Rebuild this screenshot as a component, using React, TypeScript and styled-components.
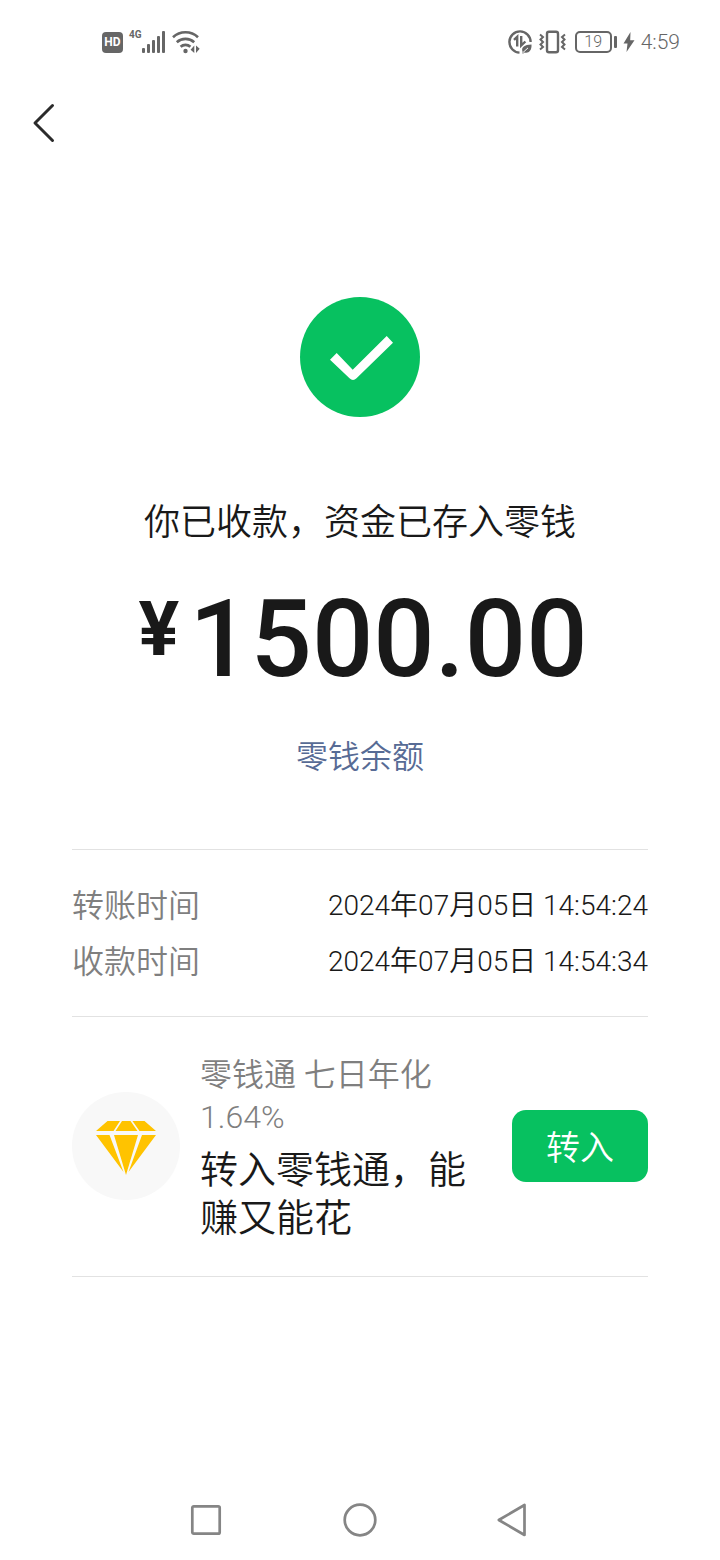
import React from "react";
import styled, { createGlobalStyle } from "styled-components";

const GlobalStyle = createGlobalStyle`
  * { box-sizing: border-box; }
  body {
    margin: 0;
    background: #fff;
    color: #191919;
    font-family: Roboto, "Noto Sans CJK SC", sans-serif;
    font-weight: 350;
  }
  p, h1, dl, dd { margin: 0; font-weight: inherit; }
  button { font: inherit; border: 0; padding: 0; background: none; cursor: pointer; }
  svg { display: block; }
`;

const Screen = styled.div`
  min-height: 100vh;
  display: flex;
  flex-direction: column;
`;

const StatusBar = styled.header`
  display: flex;
  justify-content: space-between;
  align-items: center;
  height: 84px;
  padding: 0 40px 0 102px;
  color: #666;
`;

const StatusGroup = styled.div`
  display: flex;
  align-items: center;
  gap: 6px;
`;

const HdBadge = styled.span`
  width: 21px;
  height: 21px;
  border-radius: 4px;
  background: #666;
  color: #fff;
  font: 700 12px/21px Roboto, sans-serif;
  text-align: center;
`;

const Signal = styled.div`
  display: flex;
  align-items: flex-start;
  height: 24px;
`;

const Network = styled.span`
  font: 700 10px/10px Roboto, sans-serif;
`;

const Battery = styled.span`
  display: flex;
  align-items: center;
  gap: 2px;
  margin-left: 3px;
  &::after {
    content: "";
    width: 3px;
    height: 12px;
    border-radius: 1px;
    background: #666;
  }
`;

const BatteryLevel = styled.span`
  width: 37px;
  height: 22px;
  border: 2px solid #666;
  border-radius: 5px;
  font: 300 16px/18px Roboto, sans-serif;
  text-align: center;
`;

const Clock = styled.time`
  font: 300 21px/24px Roboto, sans-serif;
`;

const TitleBar = styled.nav`
  display: flex;
  align-items: center;
  height: 78px;
  padding: 0 32px;
`;

const Main = styled.main`
  flex: 1;
  padding: 135px 72px 0;
`;

const Result = styled.section`
  display: flex;
  flex-direction: column;
  align-items: center;
  padding-bottom: 68px;
`;

const ResultText = styled.h1`
  margin-top: 82px;
  font-size: 36px;
  line-height: 48px;
`;

const Amount = styled.p`
  display: flex;
  align-items: flex-start;
  gap: 10px;
  margin-top: 36px;
  padding-left: 6px;
  font: 500 108px/112px Roboto, sans-serif;
`;

const Currency = styled.span`
  font-size: 76px;
  line-height: 92px;
  font-weight: 700;
`;

const BalanceLink = styled.a`
  margin-top: 38px;
  color: #576b95;
  font-size: 32px;
  line-height: 48px;
  text-decoration: none;
`;

const Details = styled.dl`
  padding: 28px 0 26px;
  border-top: 1px solid #e2e2e2;
  border-bottom: 1px solid #e2e2e2;
`;

const DetailRow = styled.div`
  display: flex;
  justify-content: space-between;
  line-height: 56px;
`;

const Label = styled.dt`
  color: #7f7f7f;
  font-size: 32px;
`;

const Value = styled.dd`
  font-size: 28px;
`;

const Promo = styled.section`
  display: flex;
  align-items: center;
  height: 260px;
  padding-bottom: 2px;
  border-bottom: 1px solid #e2e2e2;
`;

const PromoIcon = styled.div`
  display: grid;
  place-items: center;
  flex: none;
  width: 108px;
  height: 108px;
  padding-top: 4px;
  border-radius: 50%;
  background: #f8f8f8;
`;

const PromoText = styled.div`
  flex: 1;
  display: flex;
  flex-direction: column;
  gap: 8px;
  margin: 0 24px 0 20px;
  padding-top: 4px;
`;

const PromoRate = styled.p`
  color: #7f7f7f;
  font-size: 32px;
  line-height: 42px;
`;

const PromoTitle = styled.p`
  font-size: 38px;
  line-height: 48px;
`;

const TransferButton = styled.button`
  && {
    flex: none;
    height: 72px;
    padding: 0 34px;
    border-radius: 14px;
    background: #07c160;
    color: #fff;
    font-size: 34px;
  }
`;

const SystemNav = styled.nav`
  display: flex;
  justify-content: center;
  align-items: center;
  gap: 118px;
  height: 80px;
`;

const SignalIcon = () => (
  <svg width="24" height="24" viewBox="0 0 24 24" fill="#666" aria-hidden="true">
    <rect x="0" y="18" width="3" height="5" rx="1" />
    <rect x="5" y="14" width="3" height="9" rx="1" />
    <rect x="10" y="10" width="3" height="13" rx="1" />
    <rect x="15" y="6" width="3" height="17" rx="1" />
    <rect x="20" y="1" width="3" height="22" rx="1" />
  </svg>
);

const WifiIcon = () => (
  <svg width="28" height="24" viewBox="0 0 28 24" fill="none" stroke="#666" strokeWidth="2.6" aria-hidden="true">
    <path d="M1 7.2C8 .6 19 .6 26 7.2" />
    <path d="M4.8 12.2C9.6 7.8 17.4 7.8 22.2 12.2" />
    <path d="M8.6 16.8C11.4 14.2 15.6 14.2 18.4 16.8" />
    <circle cx="13.5" cy="21" r="2.2" fill="#666" stroke="none" />
    <path d="M22.3 15.5V23L18.600 19.800zM24 23v-7.500l3.700 3.200z" fill="#666" stroke="none" />
  </svg>
);

const DataSaverIcon = () => (
  <svg width="26" height="26" viewBox="0 0 26 26" fill="none" stroke="#666" aria-hidden="true">
    <path d="M12.500 23.600A10.600 10.600 0 1 1 23.600 13" strokeWidth="2.400" />
    <path d="M7 10.800l3.200-3V17.500M14.200 7v9.500l4.200-4" strokeWidth="2.400" />
    <path d="M15.500 22.500c-1.500-4.500 2-6.700 9-7 .4 6.200-3 9.200-7 8l-1.800 1.500z" fill="#666" stroke="none" />
    <path d="M16 23.500l5-4.600" stroke="#fff" strokeWidth="1" />
  </svg>
);

const VibrateIcon = () => (
  <svg width="27" height="24" viewBox="0 0 27 24" fill="none" stroke="#666" strokeWidth="2.400" aria-hidden="true">
    <rect x="8" y="1.700" width="11" height="20.600" rx="2" />
    <path d="M1 4.500l3 2.500-2.500 2.500L4 12l-2.500 2.500L4 17l-3 2.500M26 4.500L23 7l2.500 2.500L23 12l2.500 2.500L23 17l3 2.500" strokeWidth="2" />
  </svg>
);

const BoltIcon = () => (
  <svg width="12" height="20" viewBox="0 0 12 20" fill="#666" aria-hidden="true">
    <path d="M7.500 0L.5 11.500h4L3.500 20 11.500 8.200H7.200z" />
  </svg>
);

const BackIcon = () => (
  <svg width="24" height="40" viewBox="0 0 24 40" fill="none" stroke="#2b2b2b" strokeWidth="3" strokeLinecap="round" strokeLinejoin="round" aria-hidden="true">
    <path d="M20.500 2.500L3 20l17.500 17.500" />
  </svg>
);

const SuccessIcon = () => (
  <svg width="120" height="120" viewBox="0 0 120 120" role="img" aria-label="成功">
    <circle cx="60" cy="60" r="60" fill="#07c160" />
    <path d="M30 62.700L36.700 56 52.700 72.700 86.700 39 93 45.700 56.500 81.300Q53 84.500 49.500 81.300z" fill="#fff" />
  </svg>
);

const DiamondIcon = () => (
  <svg width="60" height="54" viewBox="0 0 60 54" fill="#ffc300" aria-hidden="true">
    <path d="M11.500 0H24L17.500 10H0zM26 0h8.500l7 10H19.500zM36.500 0h12L60 10H43.500z" />
    <path d="M0 14h13.500l14 37zM18 14h24L30 54zM46 14h14L32.500 51z" />
  </svg>
);

const RecentsIcon = () => (
  <svg width="34" height="34" viewBox="0 0 34 34" fill="none" stroke="#858585" strokeWidth="2.700" aria-hidden="true">
    <rect x="2.300" y="3.300" width="27.400" height="27.400" rx="1.500" />
  </svg>
);

const HomeIcon = () => (
  <svg width="36" height="34" viewBox="0 0 36 34" fill="none" stroke="#858585" strokeWidth="2.700" aria-hidden="true">
    <circle cx="18" cy="17" r="15.300" />
  </svg>
);

const NavBackIcon = () => (
  <svg width="34" height="34" viewBox="0 0 34 34" fill="none" stroke="#858585" strokeWidth="2.700" strokeLinejoin="round" aria-hidden="true">
    <path d="M28.500 2v30L2.800 17z" />
  </svg>
);

const details = [
  { label: "转账时间", value: "2024年07月05日 14:54:24" },
  { label: "收款时间", value: "2024年07月05日 14:54:34" },
];

export default function App() {
  return (
    <Screen lang="zh-CN">
      <GlobalStyle />
      <StatusBar>
        <StatusGroup>
          <HdBadge>HD</HdBadge>
          <Signal>
            <Network>4G</Network>
            <SignalIcon />
          </Signal>
          <WifiIcon />
        </StatusGroup>
        <StatusGroup>
          <DataSaverIcon />
          <VibrateIcon />
          <Battery>
            <BatteryLevel>19</BatteryLevel>
          </Battery>
          <BoltIcon />
          <Clock>4:59</Clock>
        </StatusGroup>
      </StatusBar>
      <TitleBar>
        <button type="button" aria-label="返回">
          <BackIcon />
        </button>
      </TitleBar>
      <Main>
        <Result>
          <SuccessIcon />
          <ResultText>你已收款，资金已存入零钱</ResultText>
          <Amount>
            <Currency>¥</Currency>
            <span>1500.00</span>
          </Amount>
          <BalanceLink href="#balance">零钱余额</BalanceLink>
        </Result>
        <Details>
          {details.map((d) => (
            <DetailRow key={d.label}>
              <Label>{d.label}</Label>
              <Value>{d.value}</Value>
            </DetailRow>
          ))}
        </Details>
        <Promo>
          <PromoIcon>
            <DiamondIcon />
          </PromoIcon>
          <PromoText>
            <PromoRate>零钱通 七日年化 1.64%</PromoRate>
            <PromoTitle>转入零钱通，能赚又能花</PromoTitle>
          </PromoText>
          <TransferButton type="button">转入</TransferButton>
        </Promo>
      </Main>
      <SystemNav>
        <button type="button" aria-label="最近任务">
          <RecentsIcon />
        </button>
        <button type="button" aria-label="主屏幕">
          <HomeIcon />
        </button>
        <button type="button" aria-label="后退">
          <NavBackIcon />
        </button>
      </SystemNav>
    </Screen>
  );
}
